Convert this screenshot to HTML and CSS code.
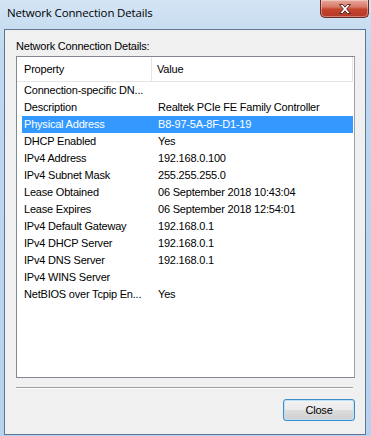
FILE: index.html
```html
<!DOCTYPE html>
<html lang="en">
<head>
  <meta charset="UTF-8" />
  <title>Network Connection Details</title>
  <link rel="stylesheet" href="styles.css">
</head>
<body>

  <div class="window">
    <div class="titlebar">
      <span class="title">Network Connection Details</span>
      <div class="close-x">
        <svg width="16" height="12" viewBox="0 0 16 12">
          <path d="M2.5 1.5h3.2L8 4.2l2.3-2.7h3.2L9.7 6l3.8 4.5h-3.2L8 7.8l-2.3 2.7H2.5L6.3 6z"
                fill="#ffffff" stroke="#5a2a22" stroke-width="1" stroke-linejoin="round" />
        </svg>
      </div>
    </div>

    <div class="client">
      <div class="caption">Network Connection Details:</div>

      <div class="listbox">
        <div class="head">
          <div class="col-prop">Property</div>
          <div class="col-val">Value</div>
        </div>
        <div class="rows" id="rows"></div>
      </div>

      <div class="separator"></div>

      <div class="actions">
        <button class="btn">Close</button>
      </div>
    </div>
  </div>

  <script>
    const details = [
      ['Connection-specific DN...', ''],
      ['Description', 'Realtek PCIe FE Family Controller'],
      ['Physical Address', 'B8-97-5A-8F-D1-19'],
      ['DHCP Enabled', 'Yes'],
      ['IPv4 Address', '192.168.0.100'],
      ['IPv4 Subnet Mask', '255.255.255.0'],
      ['Lease Obtained', '06 September 2018 10:43:04'],
      ['Lease Expires', '06 September 2018 12:54:01'],
      ['IPv4 Default Gateway', '192.168.0.1'],
      ['IPv4 DHCP Server', '192.168.0.1'],
      ['IPv4 DNS Server', '192.168.0.1'],
      ['IPv4 WINS Server', ''],
      ['NetBIOS over Tcpip En...', 'Yes']
    ];

    const rows = document.getElementById('rows');

    details.forEach(([prop, val], i) => {
      const row = document.createElement('div');
      row.className = 'row' + (i === 2 ? ' selected' : '');
      row.innerHTML = '<div class="col-prop"></div><div class="col-val"></div>';
      row.children[0].textContent = prop;
      row.children[1].textContent = val;
      rows.appendChild(row);
    });
  </script>

</body>
</html>
```

FILE: styles.css
```css
* {
  box-sizing: border-box;
}

body {
  margin: 0;
  font-family: 'Liberation Sans', Arial, sans-serif;
  font-size: 11px;
  letter-spacing: -0.2px;
  color: #000;
}

.window {
  width: 371px;
  height: 436px;
  background: linear-gradient(180deg, #d3e4f4 0%, #c0d8f0 12%, #b6d2ee 100%);
  display: flex;
  flex-direction: column;
  padding: 0 5px 1px 4px;
}

/* Barra de título */
.titlebar {
  height: 29px;
  display: flex;
  justify-content: space-between;
  align-items: flex-start;
}

.title {
  font-family: 'Open Sans', 'Noto Sans', sans-serif;
  font-size: 11.5px;
  margin: 5px 0 0 3px;
  color: #000;
  letter-spacing: -0.15px;
}

.close-x {
  width: 49px;
  height: 18px;
  margin-right: -3px;
  border: 1px solid #6b2b20;
  border-top: none;
  border-radius: 0 0 5px 5px;
  background: linear-gradient(180deg, #e9a99b 0%, #d77a68 40%, #c4432c 55%, #b5382a 100%);
  box-shadow: inset 0 0 0 1px rgba(255, 255, 255, 0.35);
  display: flex;
  justify-content: center;
  align-items: center;
}

/* Zona cliente */
.client {
  flex: 1;
  background: #f0f0f0;
  border: 1px solid #5f7590;
  padding: 9px 10px 0 11px;
  display: flex;
  flex-direction: column;
}

.caption {
  height: 14px;
  line-height: 14px;
  margin-bottom: 3px;
}

.listbox {
  height: 322px;
  background: #fff;
  border: 1px solid #828790;
  border-right-color: #9ea3aa;
}

.head {
  height: 25px;
  display: flex;
  align-items: center;
  border-bottom: 1px solid #e5e5e5;
  margin-right: 1px;
  border-right: 1px solid #e5e5e5;
}

.head .col-prop {
  width: 135px;
  height: 100%;
  padding-left: 7px;
  display: flex;
  align-items: center;
  border-right: 1px solid #e5e5e5;
}

.head .col-val {
  padding-left: 5px;
}

.row {
  height: 17px;
  line-height: 17px;
  display: flex;
  margin-left: 5px;
  margin-right: 1px;
  white-space: nowrap;
}

.row .col-prop {
  width: 136px;
  padding-left: 2px;
}

.row.selected {
  background: #3399ff;
  color: #fff;
}

.separator {
  margin-top: 9px;
  margin-right: 2px;
  border-top: 1px solid #a0a0a0;
  border-bottom: 1px solid #fff;
}

.actions {
  display: flex;
  justify-content: flex-end;
  margin-top: 10px;
}

.btn {
  width: 72px;
  height: 22px;
  font-family: inherit;
  font-size: 11px;
  letter-spacing: inherit;
  color: #000;
  border: 1px solid #3c8cc8;
  border-radius: 3px;
  background: linear-gradient(180deg, #f2f2f2 0%, #ebebeb 48%, #dddddd 52%, #cfcfcf 100%);
  box-shadow: inset 0 0 0 1px #bde2f8;
  padding: 0;
}
```
